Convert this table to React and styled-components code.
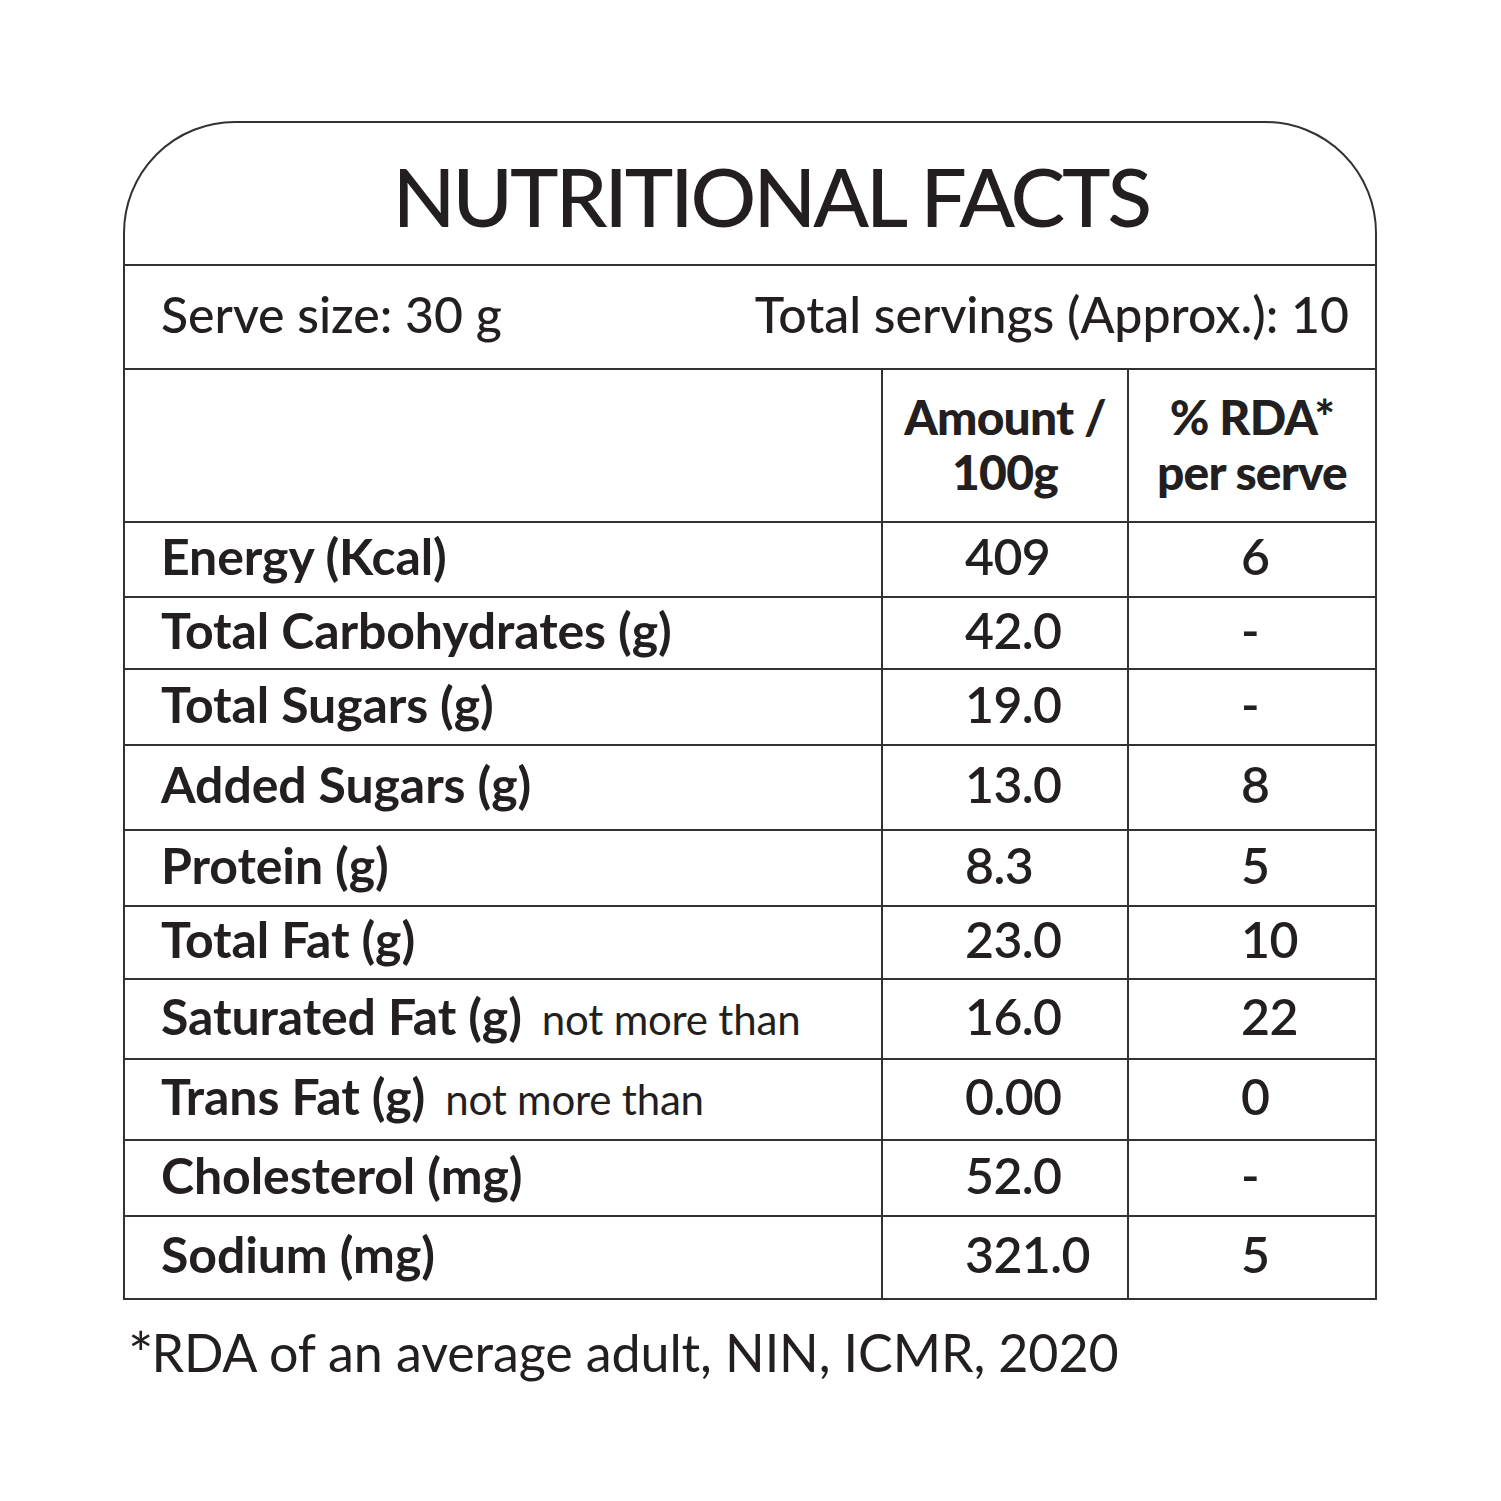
import React from "react";
import styled, { createGlobalStyle } from "styled-components";

const Global = createGlobalStyle`
  html, body { margin: 0; padding: 0; background: #ffffff; }
  body { font-family: Lato, "Open Sans", sans-serif; color: #231f20; }
`;

const Page = styled.div`
  width: 1501px;
  height: 1501px;
  padding-top: 121px;
  padding-left: 123px;
  box-sizing: border-box;
  background: #fff;
`;

const Card = styled.div`
  width: 1254px;
  box-sizing: border-box;
  border: 2px solid #333132;
  border-radius: 112px 112px 0 0;
  display: flex;
  flex-direction: column;
`;

const TitleBar = styled.div`
  height: 141px;
  display: flex;
  align-items: center;
  justify-content: center;
  padding-left: 42px;
  padding-top: 2px;
  box-sizing: border-box;
  font-size: 82px;
  font-weight: 500;
  letter-spacing: -3px;
  line-height: 1;
`;

const Row = styled.div`
  height: ${(p) => p.$h}px;
  box-sizing: border-box;
  border-top: 2px solid #333132;
  display: grid;
  grid-template-columns: ${(p) => (p.$split ? "1fr auto" : "756px 246px 1fr")};
`;

const ServeText = styled.div`
  display: flex;
  align-items: center;
  justify-content: ${(p) => (p.$right ? "flex-end" : "flex-start")};
  padding: ${(p) => (p.$right ? "0 26px 6px 0" : "0 0 6px 36px")};
  font-size: 50px;
  font-weight: 500;
  letter-spacing: 0px;
  line-height: 1;
  white-space: nowrap;
`;

const Cell = styled.div`
  display: flex;
  align-items: center;
  box-sizing: border-box;
  border-left: ${(p) => (p.$first ? "none" : "2px solid #333132")};
  padding-left: ${(p) => p.$pad}px;
  padding-bottom: 7px;
  justify-content: flex-start;
  font-size: 50px;
  font-weight: 700;
  letter-spacing: -0.1px;
  line-height: 1;
  white-space: nowrap;
`;

const Num = styled(Cell)`
  font-weight: 600;
  letter-spacing: -0.6px;
`;

const HeadCell = styled(Cell)`
  flex-direction: column;
  justify-content: center;
  align-items: center;
  padding-left: 0;
  padding-bottom: 4px;
  font-weight: 900;
  font-size: 48px;
  line-height: 55px;
  letter-spacing: -0.8px;
  text-align: center;
`;

const Note = styled.span`
  font-size: 42px;
  font-weight: 400;
  letter-spacing: -0.2px;
  margin-left: 20px;
  padding-top: 6px;
`;

const Footer = styled.div`
  margin-top: 13px;
  margin-left: 5px;
  font-size: 52px;
  font-weight: 400;
  letter-spacing: -0.1px;
  line-height: 1.2;
`;

const Star = styled.span`
  font-size: 60px;
  position: relative;
  top: 4px;
  margin-right: -2px;
`;

const rows = [
  { name: "Energy (Kcal)", amt: "409", rda: "6", h: 75 },
  { name: "Total Carbohydrates (g)", amt: "42.0", rda: "-", h: 72 },
  { name: "Total Sugars (g)", amt: "19.0", rda: "-", h: 76 },
  { name: "Added Sugars (g)", amt: "13.0", rda: "8", h: 85 },
  { name: "Protein (g)", amt: "8.3", rda: "5", h: 76 },
  { name: "Total Fat (g)", amt: "23.0", rda: "10", h: 73 },
  { name: "Saturated Fat (g)", note: "not more than", amt: "16.0", rda: "22", h: 80 },
  { name: "Trans Fat (g)", note: "not more than", amt: "0.00", rda: "0", h: 81 },
  { name: "Cholesterol (mg)", amt: "52.0", rda: "-", h: 76 },
  { name: "Sodium (mg)", amt: "321.0", rda: "5", h: 83 },
];

export default function App() {
  return (
    <>
      <Global />
      <Page>
        <Card>
          <TitleBar>NUTRITIONAL FACTS</TitleBar>
          <Row $h={104} $split>
            <ServeText>Serve size: 30 g</ServeText>
            <ServeText $right>Total servings (Approx.): 10</ServeText>
          </Row>
          <Row $h={153}>
            <Cell $first />
            <HeadCell>
              <div>Amount /</div>
              <div>100g</div>
            </HeadCell>
            <HeadCell>
              <div>% RDA*</div>
              <div>per serve</div>
            </HeadCell>
          </Row>
          {rows.map((r) => (
            <Row key={r.name} $h={r.h}>
              <Cell $first $pad={36}>
                {r.name}
                {r.note && <Note>{r.note}</Note>}
              </Cell>
              <Num $pad={82}>{r.amt}</Num>
              <Num $pad={112}>{r.rda}</Num>
            </Row>
          ))}
        </Card>
        <Footer>
          <Star>*</Star>RDA of an average adult, NIN, ICMR, 2020
        </Footer>
      </Page>
    </>
  );
}
